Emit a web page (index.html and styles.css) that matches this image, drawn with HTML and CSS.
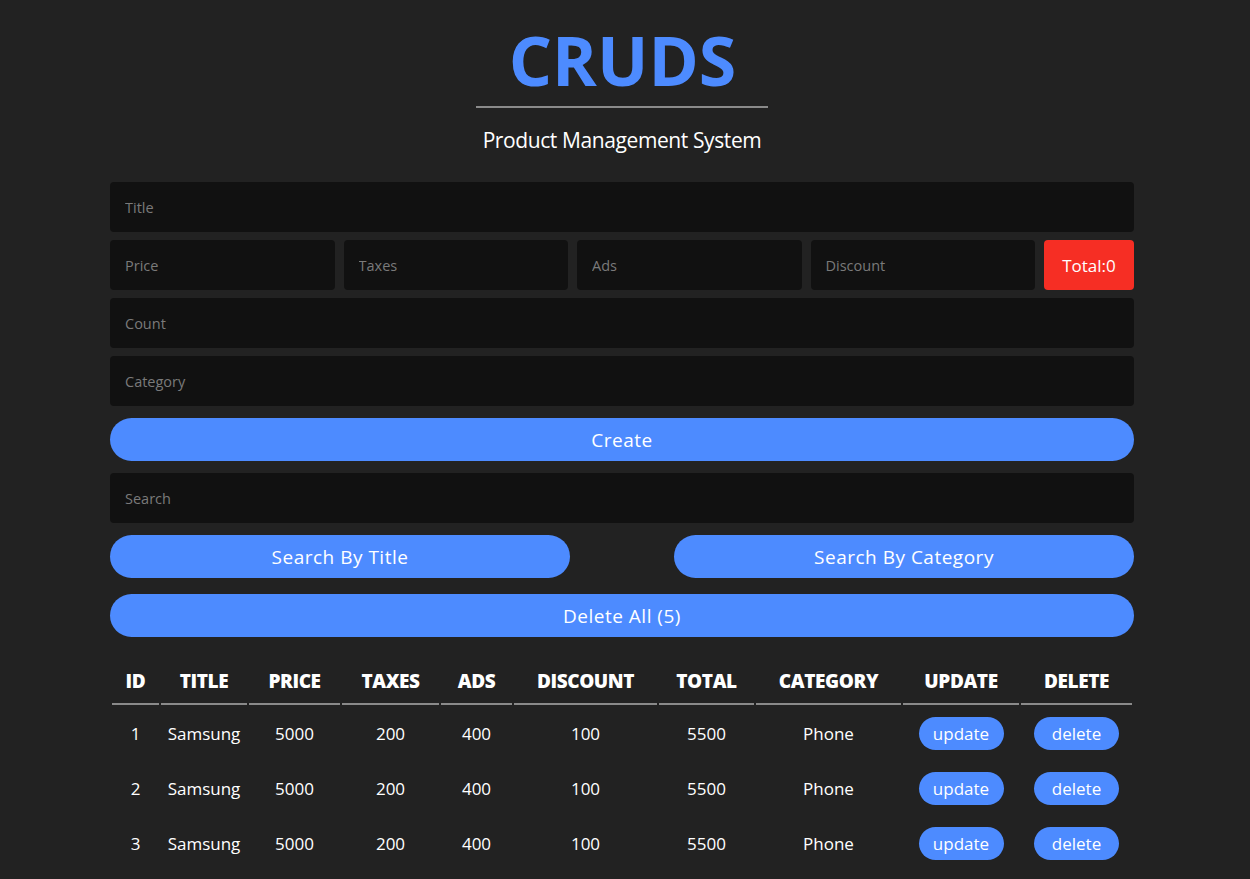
FILE: index.html
```html
<!DOCTYPE html>
<html lang="en">
<head>
<meta charset="UTF-8">
<title>CRUDS</title>
<link rel="stylesheet" href="styles.css">
</head>
<body>
<div class="crud">
  <div class="head">
    <h2 class="logo">CRUDS</h2>
    <p class="subtitle">Product Management System</p>
  </div>
  <div class="inputs">
    <input type="text" class="field" placeholder="Title">
    <div class="price">
      <input type="number" class="field" placeholder="Price">
      <input type="number" class="field" placeholder="Taxes">
      <input type="number" class="field" placeholder="Ads">
      <input type="number" class="field" placeholder="Discount">
      <small class="total">Total:0</small>
    </div>
    <input type="number" class="field" placeholder="Count">
    <input type="text" class="field" placeholder="Category">
    <button class="btn create">Create</button>
  </div>
  <div class="outputs">
    <div class="search-block">
      <input type="text" class="field" placeholder="Search">
      <div class="btn-search">
        <button class="btn">Search By Title</button>
        <button class="btn">Search By Category</button>
      </div>
    </div>
    <button class="btn delete-all">Delete All (5)</button>
    <table class="table">
      <colgroup>
        <col class="c-id"><col class="c-title"><col class="c-price"><col class="c-taxes"><col class="c-ads"><col class="c-discount"><col class="c-total"><col class="c-category"><col class="c-update"><col class="c-delete">
      </colgroup>
      <thead>
        <tr>
          <th>ID</th><th>Title</th><th>Price</th><th>Taxes</th><th>Ads</th><th>Discount</th><th>Total</th><th>Category</th><th>Update</th><th>Delete</th>
        </tr>
      </thead>
      <tbody>
        <tr><td>1</td><td>Samsung</td><td>5000</td><td>200</td><td>400</td><td>100</td><td>5500</td><td>Phone</td><td><button class="pill">update</button></td><td><button class="pill">delete</button></td></tr>
        <tr><td>2</td><td>Samsung</td><td>5000</td><td>200</td><td>400</td><td>100</td><td>5500</td><td>Phone</td><td><button class="pill">update</button></td><td><button class="pill">delete</button></td></tr>
        <tr><td>3</td><td>Samsung</td><td>5000</td><td>200</td><td>400</td><td>100</td><td>5500</td><td>Phone</td><td><button class="pill">update</button></td><td><button class="pill">delete</button></td></tr>
      </tbody>
    </table>
  </div>
</div>
</body>
</html>
```

FILE: styles.css
```css
* {
  box-sizing: border-box;
}

html, body {
  margin: 0;
  padding: 0;
  background: #222222;
  color: #ffffff;
  font-family: "Open Sans", "DejaVu Sans", sans-serif;
}

.crud {
  width: 1024px;
  margin-left: calc(50% - 515px);
}

.head {
  display: flex;
  flex-direction: column;
  align-items: center;
  padding-top: 20px;
}

.logo {
  margin: 0;
  font-size: 68px;
  line-height: 80px;
  font-weight: 700;
  color: #4d8bff;
  letter-spacing: 0;
  padding: 0 32px 6px 33px;
  border-bottom: 2px solid #8a8a8a;
  text-align: center;
}

.subtitle {
  margin: 17px 0 0;
  font-size: 21px;
  line-height: 30px;
  letter-spacing: -0.4px;
}

.inputs {
  display: flex;
  flex-direction: column;
  gap: 8px;
  margin-top: 27px;
}

.field {
  display: block;
  width: 100%;
  height: 50px;
  border: none;
  outline: none;
  border-radius: 4px;
  background: #111111;
  color: #fff;
  padding: 0 15px;
  font-family: inherit;
  font-size: 14.5px;
}

.field::placeholder {
  color: #7a7a7a;
}

.price {
  display: flex;
  gap: 9px;
}

.price .field {
  flex: 1;
}

.total {
  flex: 0 0 90px;
  height: 50px;
  background: #f62e24;
  border-radius: 4px;
  display: flex;
  align-items: center;
  justify-content: center;
  font-size: 17px;
  color: #fff;
}

.btn {
  display: block;
  width: 100%;
  height: 43px;
  border: none;
  border-radius: 22px;
  background: #4d8bff;
  color: #fff;
  font-family: inherit;
  font-size: 19px;
  letter-spacing: 0.5px;
  cursor: pointer;
}

.create {
  margin-top: 4px;
}

.outputs {
  margin-top: 12px;
}

.search-block {
  display: flex;
  flex-direction: column;
  gap: 12px;
}

.btn-search {
  display: flex;
  justify-content: space-between;
}

.btn-search .btn {
  width: 460px;
}

.delete-all {
  margin-top: 16px;
}

.table {
  width: 1024px;
  table-layout: fixed;
  border-spacing: 2px;
  margin-top: 20px;
  text-align: center;
}

.c-id { width: 47px; }
.c-title { width: 86px; }
.c-price { width: 91px; }
.c-taxes { width: 97px; }
.c-ads { width: 71px; }
.c-discount { width: 143px; }
.c-total { width: 95px; }
.c-category { width: 145px; }
.c-update { width: 116px; }
.c-delete { width: 111px; }

.table th {
  text-transform: uppercase;
  font-size: 19px;
  font-weight: 800;
  padding: 9px 0 9px;
  border-bottom: 2px solid #8a8a8a;
  letter-spacing: -0.4px;
}

.table td {
  font-size: 17px;
  height: 53px;
  padding: 0;
}

.pill {
  height: 33px;
  width: 85px;
  border: none;
  border-radius: 17px;
  background: #4d8bff;
  color: #fff;
  font-family: inherit;
  font-size: 17px;
  cursor: pointer;
}
```
